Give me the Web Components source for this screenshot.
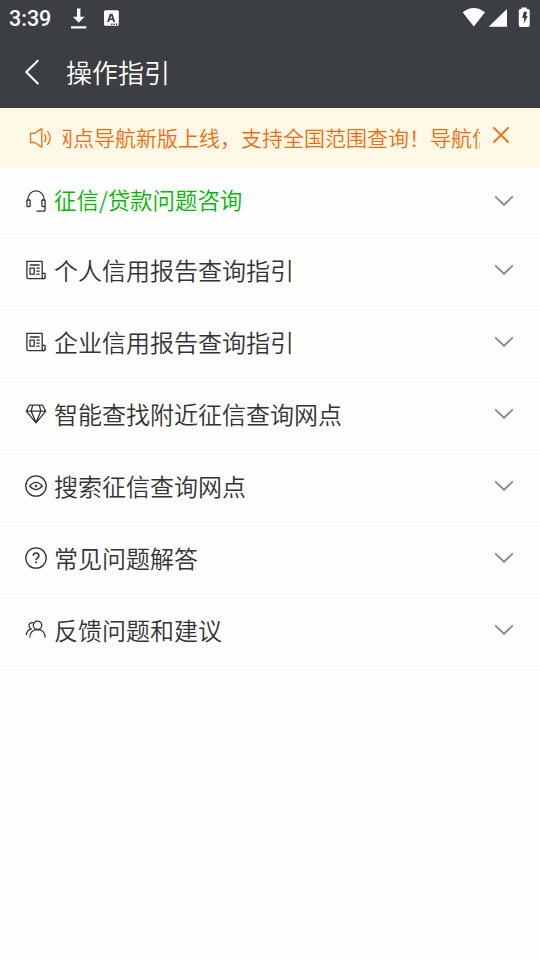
<!DOCTYPE html>
<html lang="zh-CN">
<head>
<meta charset="UTF-8">
<title>操作指引</title>
<style>
  body {
    margin: 0;
    background: #fefefe;
    font-family: "Noto Sans CJK SC", sans-serif;
    font-weight: 350;
    color: #333;
  }
</style>
</head>
<body>
<guide-page></guide-page>
<script>
// line icons of the list, all on a 24x24 grid
const icons = {
  headset: `<path d="M3.8 11.2C3.8 5.4 7.5 1.8 12 1.8s8.2 3.6 8.2 9.4"/><rect x="2.9" y="11" width="3.2" height="6.6" rx=".8"/><rect x="17.9" y="11" width="3.2" height="6.6" rx=".8"/><path d="M21.1 17v3.3q0 1.9-1.9 1.9h-6.8"/>`,
  news: `<path d="M18.2 20.6H4.2a1.3 1.3 0 0 1-1.3-1.3V3.4h15.3v15.9a1.3 1.3 0 0 0 2.9 0v-3.9h-2.9"/><path d="M5.8 7h9.8M12.4 10.2h3.3M12.4 13.2h3.3M12.4 16.2h3.3"/><rect x="6" y="10.2" width="4.2" height="6"/><path d="M18.1 20.6h1.7q1.3 0 1.3-1.5"/>`,
  diamond: `<path d="M5.5 3.2h13l3.3 6L12 20.8 2.2 9.2zM2.2 9.2h19.6M8.6 3.4L7.2 9.2 12 20.5l4.8-11.3-1.4-5.8"/>`,
  eye: `<circle cx="12" cy="12" r="10.2"/><path d="M5.7 12q6.3-7.2 12.6 0-6.3 7.2-12.6 0z"/><circle cx="12" cy="12" r="1.2" fill="currentColor" stroke="none"/>`,
  help: `<circle cx="12" cy="12" r="10.2"/><path stroke-width="1.6" d="M9.3 9.8c0-3.8 5.7-3.7 5.6-.2 0 2.1-2.8 2.3-2.8 4.5"/><path stroke-width="1.8" d="M12.1 15.6v1.7"/>`,
  people: `<circle cx="13.5" cy="7.3" r="4.2"/><path d="M5.8 19.6c0-4.8 2.6-7.9 7.7-7.9s7.7 3.1 7.7 7.9"/><path d="M8.9 4.7C6.1 4.4 4.9 6.2 5 8c.1 1.6 1.1 2.6 2.3 3.1-3 .6-4.9 3-4.9 6.2"/>`
};

class StatusBar extends HTMLElement {
  constructor() {
    super();
    this.attachShadow({ mode: "open" });
  }
  connectedCallback() {
    this.shadowRoot.innerHTML = `
      <style>
        :host {
          display: flex;
          align-items: center;
          height: 36px;
          padding: 0 8px 0 9px;
          box-sizing: border-box;
          color: #fff;
          font: 500 21.5px/36px Roboto, sans-serif;
        }
        .time { width: 60px; padding-top: 2px; }
        svg { display: block; fill: currentColor; flex: none; }
        .spacer { flex: 1; }
      </style>
      <span class="time">3:39</span>
      <svg width="20" height="36"><path d="M8 8.5h3.4v8.2h4.1l-5.8 6.1-5.8-6.1H8zM2 26.3h15.3v2.1H2z"/></svg>
      <svg width="32" height="36"><path fill-rule="evenodd" d="M16.5 10.3h11.8q1.5 0 1.5 1.5v12.4q0 1.5-1.5 1.5H16.5q-1.5 0-1.5-1.5V11.8q0-1.5 1.5-1.5zm4.3 3.5L18.2 22h2l.6-2h2.8l.6 2h2l-2.7-8.2zm.5 4.6.9-2.8.9 2.8zM22.2 23.6v1.3h1.3v-1.3zm2.4 0v1.3h1.3v-1.3zm2.4 0v1.3h1.3v-1.3z"/></svg>
      <span class="spacer"></span>
      <svg width="70" height="36">
        <path d="M.6 12.3Q11.8 3.8 23 12.3L11.8 26.4zM45 9v17.8H26.6zM59.5 9.1v-1.7h5.2v1.7H66q1.7 0 1.7 1.7v14.5q0 1.7-1.7 1.7h-7.5q-1.7 0-1.7-1.7V10.8q0-1.7 1.7-1.7z"/>
        <path fill="#3b3e43" d="M61.8 11.8h3.1l-.8 4.1h1.7l-4.2 8 .7-5.8h-2.1z"/>
      </svg>
    `;
  }
}
customElements.define("status-bar", StatusBar);

class NavBar extends HTMLElement {
  constructor() {
    super();
    this.attachShadow({ mode: "open" });
  }
  connectedCallback() {
    this.shadowRoot.innerHTML = `
      <style>
        :host {
          display: flex;
          align-items: flex-start;
          height: 72px;
          padding-left: 22px;
          color: #fff;
          font-size: 26px;
          line-height: 71px;
        }
        svg { display: block; margin-right: 24px; }
      </style>
      <svg width="20" height="72" fill="none" stroke="currentColor" stroke-width="2"><path d="M16.3 24.3L4.3 36l12 12"/></svg>
      <slot></slot>
    `;
  }
}
customElements.define("nav-bar", NavBar);

class NoticeBar extends HTMLElement {
  constructor() {
    super();
    this.attachShadow({ mode: "open" });
  }
  connectedCallback() {
    this.shadowRoot.innerHTML = `
      <style>
        :host {
          display: flex;
          height: 60px;
          padding: 0 28px;
          background: #fffae8;
          color: #f56a0c;
          font-size: 21px;
          line-height: 58px;
        }
        svg { display: block; flex: none; fill: none; stroke: currentColor; }
        .clip {
          width: 417px;
          margin-left: 7px;
          overflow: hidden;
          white-space: nowrap;
        }
        .text { margin-left: -11px; }
      </style>
      <svg width="28" height="60" stroke-width="1.3" stroke-linejoin="round"><path d="M2.5 25.3h4.3l7-4.7v18.7l-7-4.8H2.5zM16.4 26.2q2.9 3.8 0 7.7M19.4 23.1q5.5 6.8 0 13.7"/></svg>
      <div class="clip"><div class="text"><slot></slot></div></div>
      <svg width="32" height="60" stroke-width="2"><path d="M13.4 19.4l15.2 15.2M28.6 19.4L13.4 34.6"/></svg>
    `;
  }
}
customElements.define("notice-bar", NoticeBar);

class GuideItem extends HTMLElement {
  constructor() {
    super();
    this.attachShadow({ mode: "open" });
  }
  connectedCallback() {
    this.shadowRoot.innerHTML = `
      <style>
        :host {
          display: flex;
          align-items: center;
          height: 72px;
          box-sizing: border-box;
          padding: 0 26px 2px 24px;
          border-bottom: 1px solid #f7f7f7;
          font-size: 24px;
          line-height: 69px;
        }
        :host(:last-child) { height: 71px; padding-bottom: 1px; }
        :host([active]) {
          height: 67px;
          padding-bottom: 0;
          font-size: 22.45px;
          line-height: 62px;
        }
        :host([active]) .label { padding-bottom: 4px; color: #00b800; }
        svg { display: block; flex: none; fill: none; stroke: #333; color: #333; }
        .icon { margin-right: 6px; }
        .label { flex: 1; white-space: nowrap; }
        .arrow { stroke: #909090; }
      </style>
      <svg class="icon" width="24" height="24" stroke-width="1.3" stroke-linejoin="round">${icons[this.getAttribute("icon")]}</svg>
      <span class="label"><slot></slot></span>
      <svg class="arrow" width="20" height="12" stroke-width="2"><path d="M1.2 1.4l8.8 8.4 8.8-8.4"/></svg>
    `;
  }
}
customElements.define("guide-item", GuideItem);

class GuidePage extends HTMLElement {
  constructor() {
    super();
    this.attachShadow({ mode: "open" });
  }
  connectedCallback() {
    this.shadowRoot.innerHTML = `
      <style>
        :host { display: block; height: 960px; overflow: hidden; }
        header { background: #3b3e43; }
      </style>
      <header>
        <status-bar></status-bar>
        <nav-bar>操作指引</nav-bar>
      </header>
      <notice-bar>网点导航新版上线，支持全国范围查询！导航信</notice-bar>
      <main>
        <guide-item icon="headset" active>征信/贷款问题咨询</guide-item>
        <guide-item icon="news">个人信用报告查询指引</guide-item>
        <guide-item icon="news">企业信用报告查询指引</guide-item>
        <guide-item icon="diamond">智能查找附近征信查询网点</guide-item>
        <guide-item icon="eye">搜索征信查询网点</guide-item>
        <guide-item icon="help">常见问题解答</guide-item>
        <guide-item icon="people">反馈问题和建议</guide-item>
      </main>
    `;
  }
}
customElements.define("guide-page", GuidePage);
</script>
</body>
</html>
